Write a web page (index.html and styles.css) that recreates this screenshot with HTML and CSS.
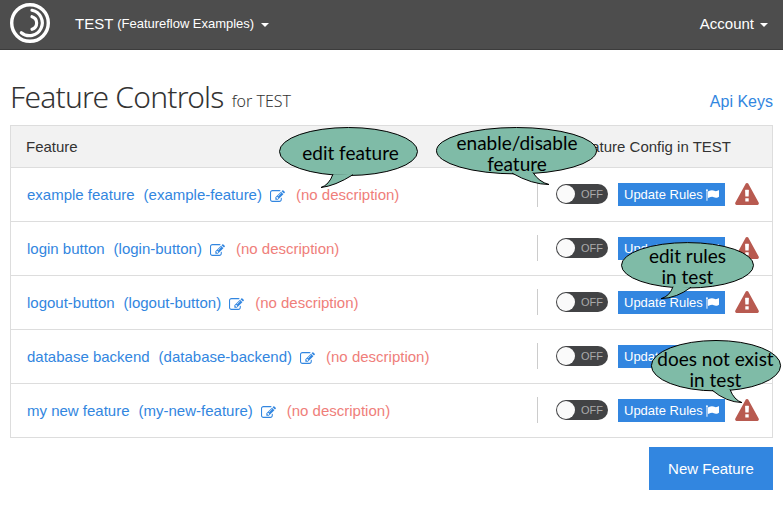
FILE: index.html
```html
<!DOCTYPE html>
<html lang="en">
<head>
<meta charset="utf-8">
<title>Feature Controls</title>
<link rel="stylesheet" href="styles.css">
</head>
<body>
<svg width="0" height="0" class="defs" aria-hidden="true">
  <symbol id="edit" viewBox="0 128 1792 1408"><path d="M888 1184l116-116-152-152-116 116v56h96v96h56zm440-720q-16-16-33 1l-350 350q-17 17-1 33t33-1l350-350q17-17 1-33zm80 594v190q0 119-84.5 203.5t-203.5 84.5h-832q-119 0-203.5-84.5t-84.5-203.5v-832q0-119 84.5-203.5t203.5-84.5h832q63 0 117 25 15 7 18 23 3 17-9 29l-49 49q-14 14-32 8-23-6-45-6h-832q-66 0-113 47t-47 113v832q0 66 47 113t113 47h832q66 0 113-47t47-113v-126q0-13 9-22l64-64q15-15 35-7t20 29zm-96-738l288 288-672 672h-288v-288zm444 132l-92 92-288-288 92-92q28-28 68-28t68 28l152 152q28 28 28 68t-28 68z"/></symbol>
  <symbol id="flag" viewBox="64 128 1728 1536"><path d="M320 256q0 72-64 110v1266q0 13-9.5 22.5t-22.5 9.5h-64q-13 0-22.5-9.5t-9.5-22.5v-1266q-64-38-64-110 0-53 37.5-90.5t90.5-37.5 90.5 37.5 37.5 90.5zm1472 64v763q0 25-12.5 38.5t-39.5 27.5q-215 116-369 116-61 0-123.5-22t-108.5-48-115.5-48-142.5-22q-192 0-464 146-17 9-33 9-26 0-45-19t-19-45v-742q0-32 31-55 21-14 79-43 236-120 421-120 107 0 200 29t219 88q38 19 88 19 54 0 117.5-21t110-47 88-47 54.5-21q26 0 45 19t19 45z"/></symbol>
  <symbol id="warn" viewBox="0 0 1792 1664"><path d="M1024 1375v-190q0-14-9.5-23.5t-22.5-9.5h-192q-13 0-22.5 9.5t-9.5 23.5v190q0 14 9.5 23.5t22.5 9.5h192q13 0 22.5-9.5t9.5-23.5zm-2-374l18-459q0-12-10-19-13-11-24-11h-220q-11 0-24 11-10 7-10 21l17 457q0 10 10 16.5t24 6.5h185q14 0 23.5-6.5t10.5-16.5zm-14-934l768 1408q35 63-2 126-17 29-46.5 46t-63.5 17h-1536q-34 0-63.5-17t-46.5-46q-37-63-2-126l768-1408q17-31 47-49t65-18 65 18 47 49z"/></symbol>
</svg>
<header class="navbar">
  <svg class="logo" viewBox="0 0 40 40" fill="none" stroke="#fff">
    <circle cx="20" cy="20" r="18.3" stroke-width="3.4"/>
    <path d="M22 7.3A12.8 12.8 0 1 1 11.3 29.7" stroke-width="3.2" stroke-linecap="round"/>
    <path d="M22 13.7A6.6 6.6 0 0 1 22 26.3" stroke-width="3.2" stroke-linecap="round"/>
  </svg>
  <div class="project">TEST <span class="org">(Featureflow Examples)</span><i class="caret"></i></div>
  <div class="account">Account<i class="caret"></i></div>
</header>
<main>
  <div class="heading">
    <h1>Feature Controls <small>for TEST</small></h1>
    <a class="keys">Api Keys</a>
  </div>
  <section class="panel">
    <div class="panel-head"><span class="col-name">Feature</span><span class="col-config">Feature Config in TEST</span></div>
    <div class="row">
      <div class="name"><a class="title">example feature</a><a class="key">(example-feature)</a><svg class="edit"><use href="#edit"/></svg><span class="desc">(no description)</span></div>
      <div class="config"><span class="switch"><i class="knob"></i>OFF</span><a class="rules">Update Rules<svg class="flag"><use href="#flag"/></svg></a><svg class="warn"><use href="#warn"/></svg></div>
    </div>
    <div class="row">
      <div class="name"><a class="title">login button</a><a class="key">(login-button)</a><svg class="edit"><use href="#edit"/></svg><span class="desc">(no description)</span></div>
      <div class="config"><span class="switch"><i class="knob"></i>OFF</span><a class="rules">Update Rules<svg class="flag"><use href="#flag"/></svg></a><svg class="warn"><use href="#warn"/></svg></div>
    </div>
    <div class="row">
      <div class="name"><a class="title">logout-button</a><a class="key">(logout-button)</a><svg class="edit"><use href="#edit"/></svg><span class="desc">(no description)</span></div>
      <div class="config"><span class="switch"><i class="knob"></i>OFF</span><a class="rules">Update Rules<svg class="flag"><use href="#flag"/></svg></a><svg class="warn"><use href="#warn"/></svg></div>
    </div>
    <div class="row">
      <div class="name"><a class="title">database backend</a><a class="key">(database-backend)</a><svg class="edit"><use href="#edit"/></svg><span class="desc">(no description)</span></div>
      <div class="config"><span class="switch"><i class="knob"></i>OFF</span><a class="rules">Update Rules<svg class="flag"><use href="#flag"/></svg></a><svg class="warn"><use href="#warn"/></svg></div>
    </div>
    <div class="row">
      <div class="name"><a class="title">my new feature</a><a class="key">(my-new-feature)</a><svg class="edit"><use href="#edit"/></svg><span class="desc">(no description)</span></div>
      <div class="config"><span class="switch"><i class="knob"></i>OFF</span><a class="rules">Update Rules<svg class="flag"><use href="#flag"/></svg></a><svg class="warn"><use href="#warn"/></svg></div>
    </div>
  </section>
  <div class="actions"><a class="new">New Feature</a></div>
</main>
<div class="callout c-edit">
  <svg viewBox="0 0 139 61"><ellipse cx="69.5" cy="24.5" rx="69" ry="24"/><path d="M54 47.2Q50 58 42 60.5Q56 59 74 47.7"/></svg>
  <p>edit feature</p>
</div>
<div class="callout c-toggle">
  <svg viewBox="0 0 161 58"><ellipse cx="80.5" cy="23.7" rx="80" ry="23.2"/><path d="M76 46.1Q96 57.5 113 57.5Q103 55 97 45.6"/></svg>
  <p>enable/disable<br>feature</p>
</div>
<div class="callout c-rules">
  <svg viewBox="0 0 133 58"><ellipse cx="66.5" cy="23.3" rx="66" ry="22.7"/><path d="M52 44.7Q49 54 40 56.7Q56 56 70 45.2"/></svg>
  <p>edit rules<br>in test</p>
</div>
<div class="callout c-missing">
  <svg viewBox="0 0 131 64"><ellipse cx="65" cy="25.7" rx="64.6" ry="25.2"/><path d="M61 50.1Q75 62 91 62.6Q83 60 79 49.5"/></svg>
  <p>does not exist<br>in test</p>
</div>
</body>
</html>
```
FILE: styles.css
```css
* { box-sizing: border-box; }
body { margin: 0; width: 783px; height: 507px; position: relative; overflow: hidden; background: #fff; color: #333; font: 15px/20px "Liberation Sans", Arial, sans-serif; }
svg { display: block; flex: none; fill: currentColor; }
.defs { position: absolute; }
.navbar { height: 50px; background: #4d4d4d; border-bottom: 1px solid #3c3c3c; color: #fff; display: flex; align-items: center; padding: 0 15px 3px 10px; }
.logo { width: 40px; height: 40px; fill: none; }
.project { margin: 1px 0 0 25px; display: flex; align-items: center; white-space: pre; }
.org { font-size: 13px; letter-spacing: -.02px; padding-top: 1px; }
.account { margin: 1px 0 0 auto; display: flex; align-items: center; }
.caret { border: 4px solid transparent; border-top-color: #fff; border-bottom: 0; margin: 3px 0 0 7px; }
.account .caret { margin-left: 6px; }
main { padding: 0 10px; }
.heading { height: 75px; display: flex; justify-content: space-between; }
h1 { margin: 25px 0 0; font: 300 30px/44px "Noto Sans", "Open Sans", sans-serif; letter-spacing: -.77px; white-space: nowrap; }
h1 small { font-size: 16px; letter-spacing: 0; margin-left: 1px; position: relative; top: -1px; }
.keys { margin-top: 42px; font-size: 16px; color: #3286e0; }
.panel { border: 1px solid #ddd; }
.panel-head { height: 41px; background: #f2f2f2; display: flex; align-items: center; padding: 1px 41px 0 15px; justify-content: space-between; }
.row { height: 54px; border-top: 1px solid #ddd; display: flex; justify-content: space-between; align-items: center; }
.name { display: flex; align-items: center; padding: 1px 0 0 16px; color: #3286e0; white-space: nowrap; }
.key { margin-left: 9px; }
.edit { width: 15px; height: 12px; margin: 1px 11px 0 8px; }
.desc { color: #ef7e7a; }
.config { width: 235px; height: 26px; border-left: 1px solid #ccc; margin-top: -1px; display: flex; align-items: center; padding-left: 18px; }
.switch { width: 52px; height: 20px; border-radius: 10px; background: #424345; color: #aaa; display: flex; align-items: center; padding: 0 5px 0 1px; font-size: 11px; justify-content: space-between; }
.knob { width: 18px; height: 18px; border-radius: 50%; background: #fafafa; }
.rules { width: 107px; height: 23px; margin: 1px 0 0 10px; background: #3286e0; color: #fff; font-size: 13px; display: flex; align-items: center; justify-content: space-between; padding: 0 6px; }
.flag { width: 13px; height: 12px; margin-top: 1px; }
.warn { width: 24px; height: 22px; margin-left: 10px; color: #b85a50; }
.actions { display: flex; justify-content: flex-end; padding-top: 9px; }
.new { width: 124px; height: 43px; background: #3286e0; color: #fff; text-align: center; line-height: 44px; }
.callout { position: absolute; color: #000; font: 19px/21px "Lato", "Carlito", "Open Sans", sans-serif; }
.callout svg { fill: #7fbba7; stroke: #000; stroke-width: 1; width: 100%; height: 100%; overflow: visible; }
.callout p { position: absolute; left: 0; right: 0; margin: 0; text-align: center; white-space: nowrap; letter-spacing: 0; }
.c-edit { left: 279px; top: 127px; width: 139px; height: 61px; }
.c-edit p { top: 15px; left: 4px; }
.c-toggle { left: 436px; top: 127px; width: 161px; height: 58px; }
.c-toggle p { top: 5px; left: 1px; }
.c-rules { left: 621px; top: 242px; width: 133px; height: 58px; }
.c-rules p { top: 3px; }
.c-missing { left: 651px; top: 340px; width: 131px; height: 64px; }
.c-missing p { top: 8px; left: -3px; right: -1px; }
```
